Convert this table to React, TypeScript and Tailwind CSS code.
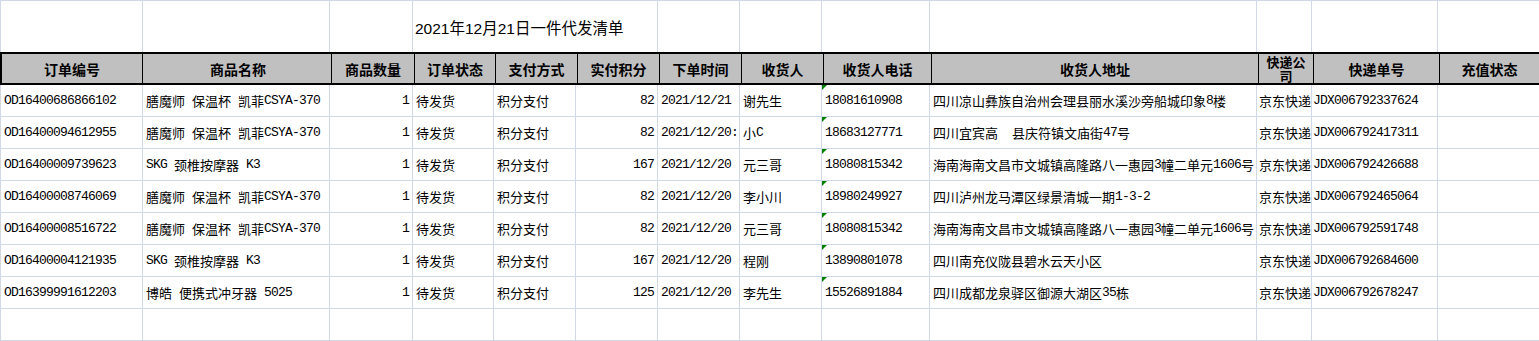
import React from 'react';

const cols = 'grid-cols-[143px_187px_83px_81px_82px_82px_82px_82px_108px_327px_55px_126px_1fr]';

const headers = ['订单编号', '商品名称', '商品数量', '订单状态', '支付方式', '实付积分', '下单时间', '收货人', '收货人电话', '收货人地址', '快递公司', '快递单号', '充值状态'];

type Row = string[];

const rows: Row[] = [
  ['OD16400686866102', '膳魔师 保温杯 凯菲CSYA-370', '1', '待发货', '积分支付', '82', '2021/12/21', '谢先生', '18081610908', '四川凉山彝族自治州会理县丽水溪沙旁船城印象8楼', '京东快递', 'JDX006792337624', ''],
  ['OD16400094612955', '膳魔师 保温杯 凯菲CSYA-370', '1', '待发货', '积分支付', '82', '2021/12/20', '小C', '18683127771', '四川宜宾高  县庆符镇文庙街47号', '京东快递', 'JDX006792417311', ''],
  ['OD16400009739623', 'SKG 颈椎按摩器 K3', '1', '待发货', '积分支付', '167', '2021/12/20', '元三哥', '18080815342', '海南海南文昌市文城镇高隆路八一惠园3幢二单元1606号', '京东快递', 'JDX006792426688', ''],
  ['OD16400008746069', '膳魔师 保温杯 凯菲CSYA-370', '1', '待发货', '积分支付', '82', '2021/12/20', '李小川', '18980249927', '四川泸州龙马潭区绿景清城一期1-3-2', '京东快递', 'JDX006792465064', ''],
  ['OD16400008516722', '膳魔师 保温杯 凯菲CSYA-370', '1', '待发货', '积分支付', '82', '2021/12/20', '元三哥', '18080815342', '海南海南文昌市文城镇高隆路八一惠园3幢二单元1606号', '京东快递', 'JDX006792591748', ''],
  ['OD16400004121935', 'SKG 颈椎按摩器 K3', '1', '待发货', '积分支付', '167', '2021/12/20', '程刚', '13890801078', '四川南充仪陇县碧水云天小区', '京东快递', 'JDX006792684600', ''],
  ['OD16399991612203', '博皓 便携式冲牙器 5025', '1', '待发货', '积分支付', '125', '2021/12/20', '李先生', '15526891884', '四川成都龙泉驿区御源大湖区35栋', '京东快递', 'JDX006792678247', ''],
  ['', '', '', '', '', '', '', '', '', '', '', '', ''],
];

const CJK = /([\u2e80-\u9fff\u3000-\u303f\uff00-\uffef]+)/;

// cjk glyphs 13px wide, latin half width 7px like the sheet's font
const Mixed = ({ s }: { s: string }) => (
  <>
    {s.split(CJK).filter(Boolean).map((p, i) =>
      CJK.test(p) ? (
        <span key={i} className="font-['Noto_Sans_CJK_SC',sans-serif] text-[13px]">{p}</span>
      ) : (
        <span key={i} className="font-['Liberation_Mono',monospace] text-[13px] tracking-[-0.8px]">{p}</span>
      )
    )}
  </>
);

const App: React.FC = () => {
  return (
    <div className="w-[1539px] h-[341px] bg-white overflow-hidden text-black">
      {/* title row */}
      <div className={`grid ${cols} h-[52px]`}>
        <div className="border-t border-l border-r border-[#d0d7e5]" />
        <div className="border-t border-r border-[#d0d7e5]" />
        <div className="border-t border-r border-[#d0d7e5]" />
        <div className="col-span-3 border-t border-r border-[#d0d7e5] flex items-center pl-[2px] pt-[5px] whitespace-nowrap font-['Liberation_Sans','Noto_Sans_CJK_SC',sans-serif] text-[15.5px]">
          2021年12月21日一件代发清单
        </div>
        <div className="border-t border-r border-[#d0d7e5]" />
        <div className="border-t border-r border-[#d0d7e5]" />
        <div className="border-t border-r border-[#d0d7e5]" />
        <div className="border-t border-r border-[#d0d7e5]" />
        <div className="border-t border-r border-[#d0d7e5]" />
        <div className="border-t border-r border-[#d0d7e5]" />
        <div className="border-t border-[#d0d7e5]" />
      </div>

      {/* header row */}
      <div className={`grid ${cols} h-[33px] bg-[#c0c0c0] border-t-2 border-b-2 border-l-2 border-black`}>
        {headers.map((h, i) => (
          <div
            key={h}
            className={`flex items-center justify-center text-center font-bold font-['Noto_Sans_CJK_SC',sans-serif] ${i === 10 ? 'text-[13px] leading-[14px] px-[3px]' : 'text-[14px] leading-[16px] whitespace-nowrap overflow-hidden'} ${i === 0 ? 'w-[141px]' : ''} ${i < 12 ? 'border-r border-black' : ''}`}
          >
            {h}
          </div>
        ))}
      </div>

      {/* data rows */}
      {rows.map((r, ri) => (
        <div key={ri} className={`grid ${cols} h-[32px]`}>
          {r.map((c, ci) => {
            const right = ci === 2 || ci === 5;
            const pad = right ? 'justify-end pr-[3px]' : ci === 10 ? 'pl-[2px]' : ci === 11 ? 'pl-[1px]' : 'pl-[3px]';
            return (
              <div
                key={ci}
                className={`relative flex items-center overflow-hidden whitespace-pre leading-[16px] border-b border-[#d0d7e5] ${ci < 12 ? 'border-r' : ''} ${ci === 0 ? 'border-l' : ''} ${pad}`}
              >
                {ci === 8 && c && (
                  <span className="absolute top-0 left-0 w-0 h-0 border-t-[5px] border-t-[#008000] border-r-[5px] border-r-transparent" />
                )}
                {c && <Mixed s={c} />}
                {ci === 6 && ri === 1 && (
                  <span className="ml-auto pr-[1px] font-['Liberation_Mono',monospace] text-[13px]">:</span>
                )}
              </div>
            );
          })}
        </div>
      ))}
    </div>
  );
};

export default App;
